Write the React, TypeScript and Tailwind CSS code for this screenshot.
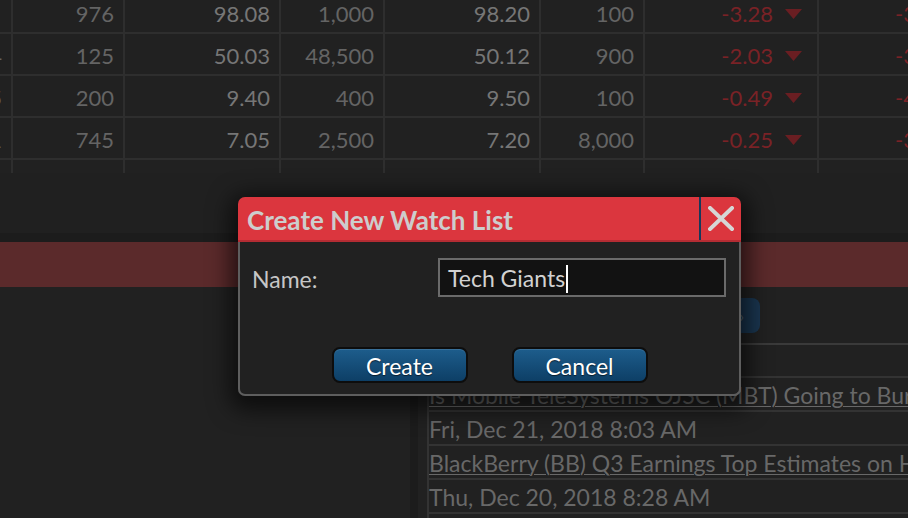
import React from "react";

const cols = [
  "w-[13px]",
  "w-[112px]",
  "w-[156px]",
  "w-[104px]",
  "w-[156px]",
  "w-[104px]",
  "w-[174px]",
];

const rows = [
  ["", "976", "98.08", "1,000", "98.20", "100", "-3.28", "-3.23%"],
  ["4", "125", "50.03", "48,500", "50.12", "900", "-2.03", "-3.90%"],
  ["5", "200", "9.40", "400", "9.50", "100", "-0.49", "-4.95%"],
  ["1", "745", "7.05", "2,500", "7.20", "8,000", "-0.25", "-3.35%"],
  ["0", "0", "0.00", "0", "0.00", "0", "0.00", "-"],
];

const news = [
  { text: "Is Mobile TeleSystems OJSC (MBT) Going to Burn These Hedge Funds?", link: true },
  { text: "Fri, Dec 21, 2018 8:03 AM", link: false },
  { text: "BlackBerry (BB) Q3 Earnings Top Estimates on Higher Revenues", link: true },
  { text: "Thu, Dec 20, 2018 8:28 AM", link: false },
  { text: "Micron (MU) Q1 Earnings Beat Estimates", link: true },
];

const Triangle = () => (
  <svg width="17" height="10" viewBox="0 0 17 10" className="ml-[12px] shrink-0">
    <polygon points="0,0 17,0 8.5,10" fill="#6a1e22" />
  </svg>
);

const QuoteTable = () => (
  <div className="h-[173px] overflow-hidden">
    <div className="-mt-[8px]">
      {rows.map((r, i) => (
        <div key={i} className="flex h-[42px] border-b-2 border-[#2e2e2e] text-[22px] leading-none">
          {cols.map((c, j) => (
            <div
              key={j}
              className={`${c} flex shrink-0 items-center justify-end overflow-hidden whitespace-nowrap border-r-2 border-[#2e2e2e] pt-[4px] ${
                j === 6 ? "pr-[15px]" : "pr-[9px]"
              } ${j === 2 || j === 4 ? "text-[#767676]" : "text-[#646464]"}`}
            >
              {j === 6 ? (
                <>
                  <span className="text-[#7a2226]">{r[j]}</span>
                  <Triangle />
                </>
              ) : (
                r[j]
              )}
            </div>
          ))}
          <div className="flex flex-1 items-center whitespace-nowrap pl-[76px] pt-[4px] text-[#7a2226]">{r[7]}</div>
        </div>
      ))}
    </div>
  </div>
);

const NewsPanel = () => (
  <div className="flex min-w-0 flex-1 flex-col overflow-hidden">
    <div className="flex h-[58px] shrink-0 border-b-2 border-[#3a3a3a] pl-[263px] pt-[11px]">
      <div className="flex h-[35px] w-[70px] items-center justify-end rounded-[8px] bg-[#1a3650] pr-[16px] text-[16px] text-[#56656f]">
        ›
      </div>
    </div>
    <div className="flex flex-1 flex-col border-l-2 border-[#333]">
      <div className="h-[33px] shrink-0 border-b-2 border-[#333]" />
      {news.map((n, i) => (
        <div
          key={i}
          className="flex h-[34px] shrink-0 items-center overflow-hidden whitespace-nowrap border-b-2 border-[#333] pt-[2px] text-[23px] leading-none text-[#686868]"
        >
          <span className={n.link ? "underline decoration-1 underline-offset-2" : ""}>{n.text}</span>
        </div>
      ))}
    </div>
  </div>
);

const WatchListDialog = () => (
  <div className="absolute left-[238px] top-[197px] w-[503px] rounded-[7px] shadow-[0_6px_22px_8px_rgba(0,0,0,0.6)]">
    <div className="flex h-[45px] items-stretch rounded-t-[7px] border-b-2 border-[#b52c33] bg-[#db363e]">
      <div className="flex flex-1 items-center pl-[9px] pt-[3px] text-[26px] font-bold leading-none text-[#cdcdcd]">
        Create New Watch List
      </div>
      <div className="w-[2px] bg-[#17385a]" />
      <div className="flex w-[40px] items-center justify-center">
        <svg width="26" height="25" viewBox="0 0 26 25">
          <path d="M2 2 L24 23 M24 2 L2 23" stroke="#d6d6d6" strokeWidth="4" strokeLinecap="square" />
        </svg>
      </div>
    </div>
    <div className="h-[154px] rounded-b-[7px] border-2 border-t-0 border-[#5e5e5e] bg-[#212121]">
      <div className="flex items-center pt-[16px]">
        <div className="w-[198px] pl-[12px] pt-[4px] text-[23px] leading-none text-[#c6c6c6]">Name:</div>
        <div className="flex h-[39px] w-[288px] items-center border-2 border-[#6a6a6a] bg-[#121212] pl-[8px] pt-[2px] text-[23px] leading-none text-[#d2d2d2]">
          <span>Tech Giants</span>
          <span className="ml-px h-[28px] w-[2px] bg-white" />
        </div>
      </div>
      <div className="flex justify-center gap-[44px] pt-[50px]">
        {["Create", "Cancel"].map((b) => (
          <div
            key={b}
            className="flex h-[36px] w-[136px] items-center justify-center rounded-[8px] border-2 border-[#0d0d0d] bg-gradient-to-b from-[#1d5d8c] to-[#0d3f66] pt-[2px] text-[23px] leading-none text-white shadow-[inset_0_1px_0_rgba(255,255,255,0.12)] [text-shadow:0_1px_1px_rgba(0,0,0,0.6)]"
          >
            {b}
          </div>
        ))}
      </div>
    </div>
  </div>
);

export default function App() {
  return (
    <div className="relative h-[518px] w-[908px] overflow-hidden bg-[#212121] font-['Lato',sans-serif]">
      <QuoteTable />
      <div className="h-[60px] bg-[#202020]" />
      <div className="h-[9px] bg-[#1c1c1c]" />
      <div className="h-[45px] bg-[#5b2a2b]" />
      <div className="flex h-[231px]">
        <div className="w-[410px] shrink-0" />
        <div className="w-[8px] shrink-0 bg-[#1c1c1c]" />
        <div className="w-[9px] shrink-0" />
        <NewsPanel />
      </div>
      <WatchListDialog />
    </div>
  );
}
